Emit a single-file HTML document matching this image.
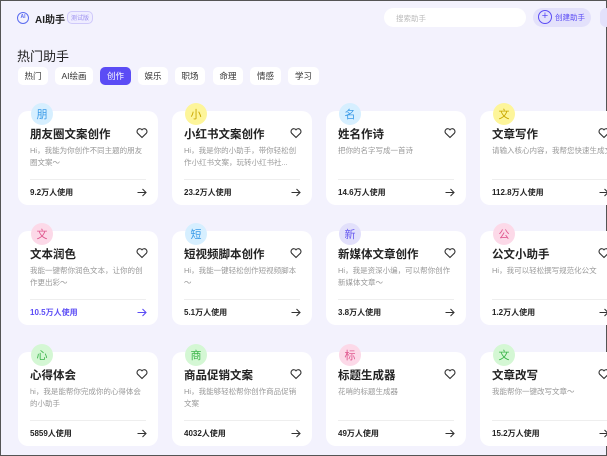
<!DOCTYPE html>
<html><head><meta charset="utf-8"><style>
*{box-sizing:border-box;margin:0;padding:0}
body{width:607px;height:456px;overflow:hidden;background:#f3f2fd;font-family:"Liberation Sans","Noto Sans CJK SC",sans-serif;position:relative;border:1px solid #555}
.abs{position:absolute}
.tab{position:absolute;top:66px;height:18px;background:#fff;border-radius:5px;font-size:8.5px;color:#333;display:flex;align-items:center;justify-content:center}
.card{position:absolute;width:140px;height:94px;background:#fff;border-radius:10px}
.ic{position:absolute;left:13px;top:-8px;width:22px;height:22px;border-radius:50%;font-size:11px;display:flex;align-items:center;justify-content:center}
.t{position:absolute;left:12px;top:15px;font-size:11.5px;font-weight:bold;color:#222}
.h{position:absolute;right:10px;top:16px;width:12px;height:12px}
.d{position:absolute;left:12px;top:34px;width:118px;font-size:7.5px;line-height:12px;color:#999;height:24px;overflow:hidden}
.ln{position:absolute;left:12px;right:12px;top:68px;border-top:1px solid #eee}
.u{position:absolute;left:12px;top:76px;font-size:8px;font-weight:bold;color:#222}
.ar{position:absolute;right:11px;top:77px;width:10px;height:9px}
</style></head><body>
<div class="abs" style="left:16px;top:11px;width:12px;height:12px;border-radius:50%;border:1.5px solid #5b6cf0;font-size:5px;color:#5b6cf0;font-weight:bold;text-align:center;line-height:9px">AI</div>
<div class="abs" style="left:34px;top:10px;font-size:10px;font-weight:bold;color:#222">AI助手</div>
<div class="abs" style="left:66px;top:10px;font-size:6px;color:#9a8ef0;border:1px solid #cfc9fa;border-radius:5px;padding:1px 3px;background:#efedff">测试版</div>
<div class="abs" style="left:383px;top:7px;width:142px;height:19px;background:#fff;border-radius:10px;font-size:7.5px;color:#bbb;padding:5px 0 0 12px">搜索助手</div>
<div class="abs" style="left:532px;top:7px;width:58px;height:19px;background:#e3e1fb;border-radius:10px;font-size:7.5px;color:#5b4cf5;padding:4px 0 0 22px">创建助手</div>
<div class="abs" style="left:537px;top:9px;width:14px;height:14px;border:1.3px solid #5b4cf5;border-radius:50%;color:#5b4cf5;font-size:11px;line-height:11px;text-align:center">+</div>
<div class="abs" style="left:599px;top:7px;width:12px;height:19px;background:#e3e1fb;border-radius:10px"></div>
<div class="abs" style="left:16px;top:45px;font-size:13px;color:#222">热门助手</div>
<div class="tab" style="left:17px;width:30px">热门</div>
<div class="tab" style="left:54px;width:38px">AI绘画</div>
<div class="tab" style="left:99px;width:31px;background:#5b4cf5;color:#fff">创作</div>
<div class="tab" style="left:137px;width:30px">娱乐</div>
<div class="tab" style="left:174px;width:30px">职场</div>
<div class="tab" style="left:212px;width:30px">命理</div>
<div class="tab" style="left:249px;width:31px">情感</div>
<div class="tab" style="left:287px;width:31px">学习</div>

<svg width="0" height="0" style="position:absolute"><defs>
<symbol id="hrt" viewBox="0 0 12 12"><path d="M6 10.5L1.6 6.2A2.5 2.5 0 0 1 6 2.8A2.5 2.5 0 0 1 10.4 6.2Z" fill="none" stroke="#333" stroke-width="1.1"/></symbol>
<symbol id="arr" viewBox="0 0 10 9"><path d="M0.5 4.5H9M5.5 1L9 4.5L5.5 8" fill="none" stroke="currentColor" stroke-width="1.1"/></symbol>
</defs></svg>

<div class="card" style="left:17px;top:110px"><div class="ic" style="background:#d6efff;color:#3a9be8">朋</div><div class="t">朋友圈文案创作</div><svg class="h"><use href="#hrt"/></svg><div class="d">Hi，我能为你创作不同主题的朋友圈文案～</div><div class="ln"></div><div class="u">9.2万人使用</div><svg class="ar" style="color:#333"><use href="#arr"/></svg></div>
<div class="card" style="left:171px;top:110px"><div class="ic" style="background:#fdf59a;color:#c9a800">小</div><div class="t">小红书文案创作</div><svg class="h"><use href="#hrt"/></svg><div class="d">Hi，我是你的小助手，带你轻松创作小红书文案，玩转小红书社...</div><div class="ln"></div><div class="u">23.2万人使用</div><svg class="ar" style="color:#333"><use href="#arr"/></svg></div>
<div class="card" style="left:325px;top:110px"><div class="ic" style="background:#d6efff;color:#3a9be8">名</div><div class="t">姓名作诗</div><svg class="h"><use href="#hrt"/></svg><div class="d">把你的名字写成一首诗</div><div class="ln"></div><div class="u">14.6万人使用</div><svg class="ar" style="color:#333"><use href="#arr"/></svg></div>
<div class="card" style="left:479px;top:110px"><div class="ic" style="background:#fdf59a;color:#c9a800">文</div><div class="t">文章写作</div><svg class="h"><use href="#hrt"/></svg><div class="d" style="width:130px">请输入核心内容，我帮您快速生成文章</div><div class="ln"></div><div class="u">112.8万人使用</div><svg class="ar" style="color:#333"><use href="#arr"/></svg></div>

<div class="card" style="left:17px;top:230px"><div class="ic" style="background:#fcd9e8;color:#e0588f">文</div><div class="t">文本润色</div><svg class="h"><use href="#hrt"/></svg><div class="d">我能一键帮你润色文本，让你的创作更出彩～</div><div class="ln"></div><div class="u" style="color:#5b4cf5">10.5万人使用</div><svg class="ar" style="color:#5b4cf5"><use href="#arr"/></svg></div>
<div class="card" style="left:171px;top:230px"><div class="ic" style="background:#d6efff;color:#3a9be8">短</div><div class="t">短视频脚本创作</div><svg class="h"><use href="#hrt"/></svg><div class="d">Hi，我能一键轻松创作短视频脚本～</div><div class="ln"></div><div class="u">5.1万人使用</div><svg class="ar" style="color:#333"><use href="#arr"/></svg></div>
<div class="card" style="left:325px;top:230px"><div class="ic" style="background:#e2e0fb;color:#6a5cf0">新</div><div class="t">新媒体文章创作</div><svg class="h"><use href="#hrt"/></svg><div class="d">Hi，我是资深小编，可以帮你创作新媒体文章～</div><div class="ln"></div><div class="u">3.8万人使用</div><svg class="ar" style="color:#333"><use href="#arr"/></svg></div>
<div class="card" style="left:479px;top:230px"><div class="ic" style="background:#fcd9e8;color:#e0588f">公</div><div class="t">公文小助手</div><svg class="h"><use href="#hrt"/></svg><div class="d" style="width:130px">Hi，我可以轻松撰写规范化公文</div><div class="ln"></div><div class="u">1.2万人使用</div><svg class="ar" style="color:#333"><use href="#arr"/></svg></div>

<div class="card" style="left:17px;top:351px"><div class="ic" style="background:#d4f7d4;color:#3bb54a">心</div><div class="t">心得体会</div><svg class="h"><use href="#hrt"/></svg><div class="d">hi，我是能帮你完成你的心得体会的小助手</div><div class="ln"></div><div class="u">5859人使用</div><svg class="ar" style="color:#333"><use href="#arr"/></svg></div>
<div class="card" style="left:171px;top:351px"><div class="ic" style="background:#d4f7d4;color:#3bb54a">商</div><div class="t">商品促销文案</div><svg class="h"><use href="#hrt"/></svg><div class="d">Hi，我能够轻松帮你创作商品促销文案</div><div class="ln"></div><div class="u">4032人使用</div><svg class="ar" style="color:#333"><use href="#arr"/></svg></div>
<div class="card" style="left:325px;top:351px"><div class="ic" style="background:#fcd9e8;color:#e0588f">标</div><div class="t">标题生成器</div><svg class="h"><use href="#hrt"/></svg><div class="d">花哨的标题生成器</div><div class="ln"></div><div class="u">49万人使用</div><svg class="ar" style="color:#333"><use href="#arr"/></svg></div>
<div class="card" style="left:479px;top:351px"><div class="ic" style="background:#d4f7d4;color:#3bb54a">文</div><div class="t">文章改写</div><svg class="h"><use href="#hrt"/></svg><div class="d" style="width:130px">我能帮你一键改写文章～</div><div class="ln"></div><div class="u">15.2万人使用</div><svg class="ar" style="color:#333"><use href="#arr"/></svg></div>
</body></html>
